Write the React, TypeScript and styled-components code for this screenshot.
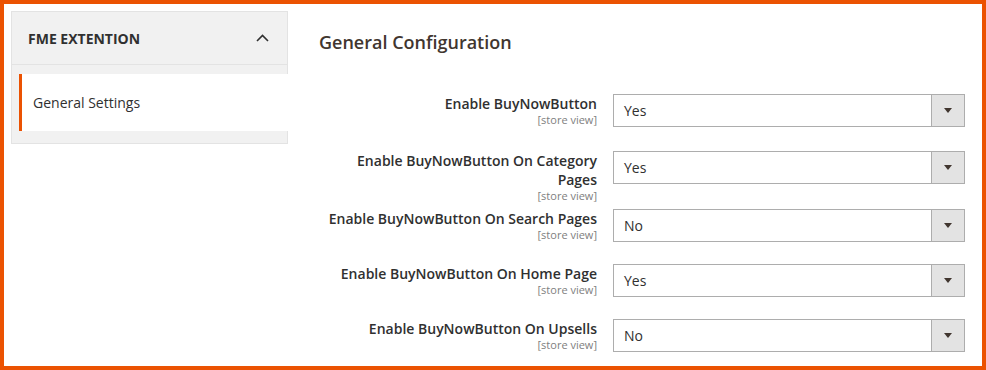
import React from 'react'
import styled, { createGlobalStyle } from 'styled-components'

const GlobalStyle = createGlobalStyle`
  html, body {
    margin: 0;
    padding: 0;
    background: #ffffff;
  }
  * {
    box-sizing: border-box;
  }
`

const Frame = styled.div`
  width: 986px;
  height: 370px;
  border: 4px solid #eb5202;
  background: #ffffff;
  display: flex;
  align-items: flex-start;
  padding: 7px 17px 0 7px;
  font-family: 'Open Sans', 'Liberation Sans', sans-serif;
  color: #303030;
  overflow: hidden;
`

const Sidebar = styled.nav`
  width: 277px;
  flex: none;
  background: #f1f1f1;
  border: 1px solid #e3e3e3;
`

const NavHeader = styled.div`
  height: 53px;
  display: flex;
  align-items: center;
  justify-content: space-between;
  padding: 0 18px 0 16px;
  border-bottom: 1px solid #e3e3e3;
`

const NavTitle = styled.span`
  font-size: 14px;
  font-weight: 700;
  text-transform: uppercase;
`

const NavList = styled.ul`
  list-style: none;
  margin: 0;
  padding: 9px 0 12px 7px;
`

const NavItem = styled.li<{ $active?: boolean }>`
  height: 57px;
  margin-right: -1px;
  display: flex;
  align-items: center;
  padding-left: 11px;
  background: #ffffff;
  border-left: 3px solid ${(p) => (p.$active ? '#eb5202' : 'transparent')};
  font-size: 14px;
  font-weight: 400;
`

const Main = styled.section`
  flex: 1;
  margin-left: 31px;
`

const Title = styled.h2`
  margin: 19px 0 40px;
  font-size: 18px;
  line-height: 24px;
  font-weight: 600;
  color: #41362f;
`

const Row = styled.div<{ $space: number }>`
  display: grid;
  grid-template-columns: 278px 352px;
  column-gap: 16px;
  align-items: start;
  margin-bottom: ${(p) => p.$space}px;
`

const LabelBox = styled.div`
  text-align: right;
`

const LabelText = styled.label`
  display: block;
  font-size: 14px;
  line-height: 19px;
  font-weight: 600;
  color: #303030;
`

const Scope = styled.div`
  font-size: 11px;
  line-height: 13px;
  color: #808080;
`

const Select = styled.div`
  height: 33px;
  display: flex;
  align-items: stretch;
  border: 1px solid #adadad;
  background: #ffffff;
`

const SelectValue = styled.span`
  flex: 1;
  display: flex;
  align-items: center;
  padding-left: 10px;
  font-size: 14px;
  color: #303030;
`

const ArrowButton = styled.span`
  width: 33px;
  display: flex;
  align-items: center;
  justify-content: center;
  background: #e3e3e3;
  border-left: 1px solid #adadad;

  &::after {
    content: '';
    width: 0;
    height: 0;
    border-left: 4px solid transparent;
    border-right: 4px solid transparent;
    border-top: 5px solid #41362f;
  }
`

const Chevron = () => (
  <svg width="13" height="8" viewBox="0 0 13 8" fill="none">
    <polyline points="1,7 6.5,1.5 12,7" stroke="#303030" strokeWidth="1.6" />
  </svg>
)

const fields = [
  { label: 'Enable BuyNowButton', value: 'Yes', space: 24 },
  { label: 'Enable BuyNowButton On Category Pages', value: 'Yes', space: 7 },
  { label: 'Enable BuyNowButton On Search Pages', value: 'No', space: 22 },
  { label: 'Enable BuyNowButton On Home Page', value: 'Yes', space: 22 },
  { label: 'Enable BuyNowButton On Upsells', value: 'No', space: 0 },
]

const App: React.FC = () => (
  <>
    <GlobalStyle />
    <Frame>
      <Sidebar>
        <NavHeader>
          <NavTitle>FME Extention</NavTitle>
          <Chevron />
        </NavHeader>
        <NavList>
          <NavItem $active>General Settings</NavItem>
        </NavList>
      </Sidebar>
      <Main>
        <Title>General Configuration</Title>
        {fields.map((f) => (
          <Row key={f.label} $space={f.space}>
            <LabelBox>
              <LabelText>{f.label}</LabelText>
              <Scope>[store view]</Scope>
            </LabelBox>
            <Select>
              <SelectValue>{f.value}</SelectValue>
              <ArrowButton />
            </Select>
          </Row>
        ))}
      </Main>
    </Frame>
  </>
)

export default App
